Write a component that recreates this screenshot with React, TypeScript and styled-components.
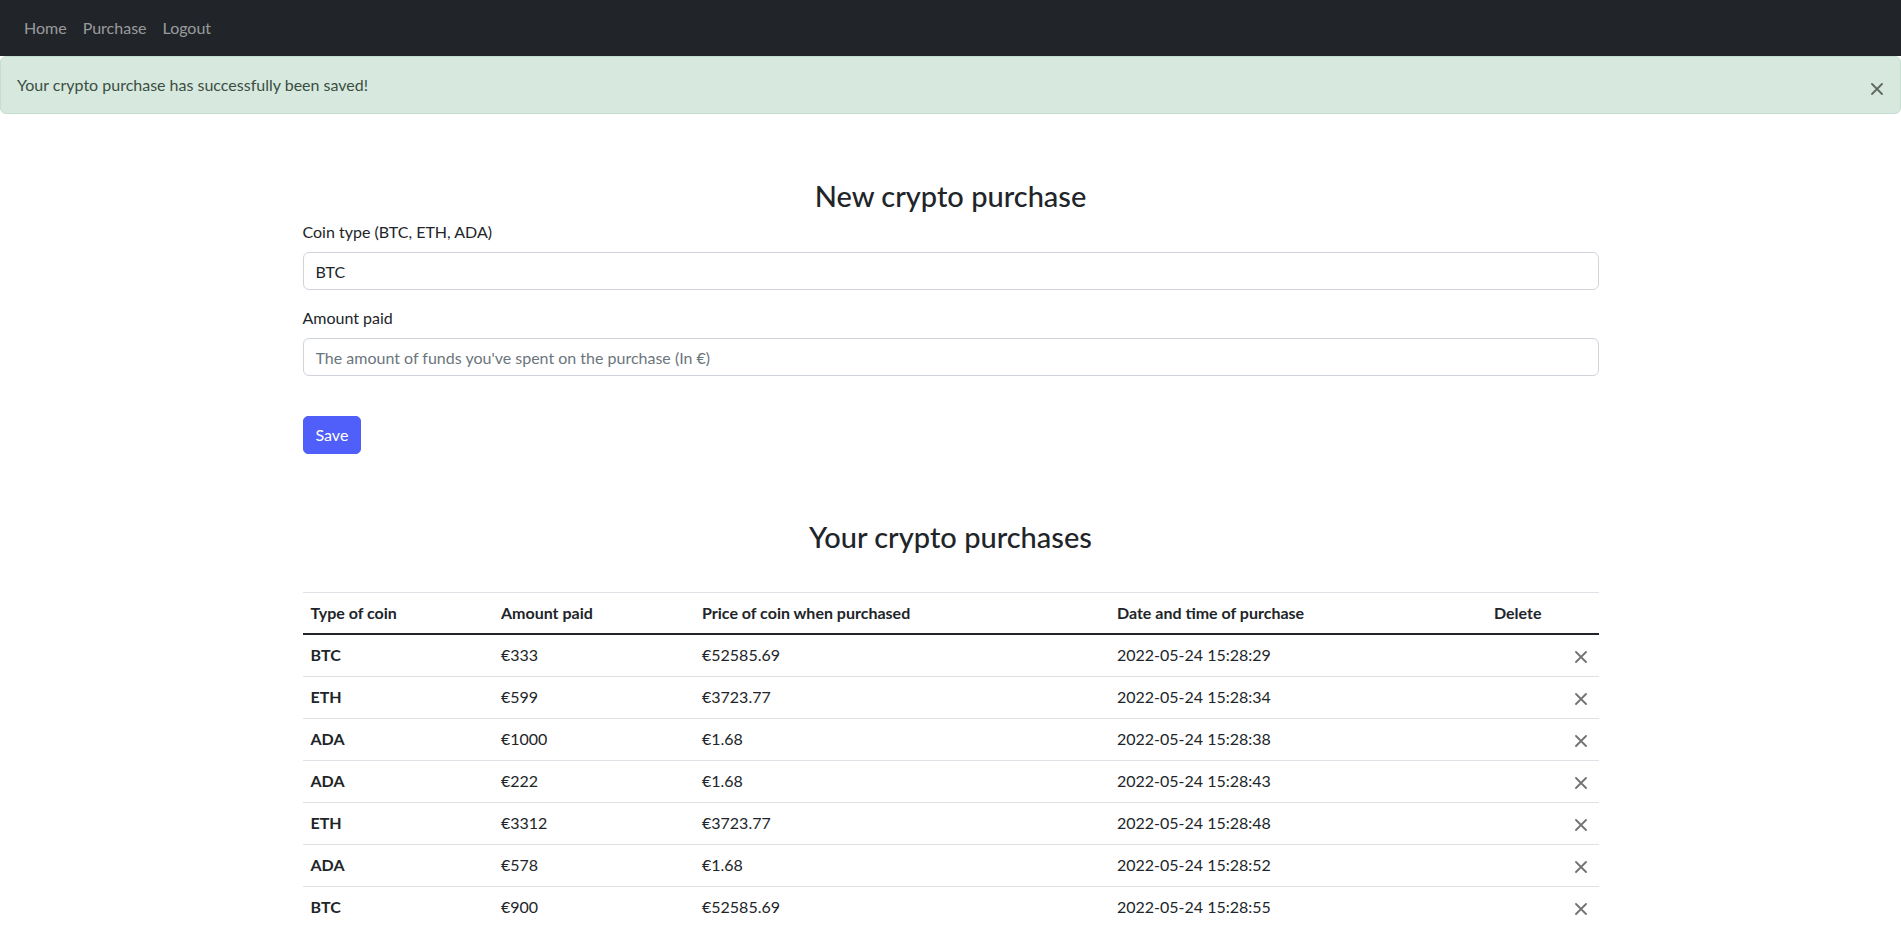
import React from "react";
import styled, { createGlobalStyle } from "styled-components";

const GlobalStyle = createGlobalStyle`
  *, *::before, *::after { box-sizing: border-box; }
  html, body { margin: 0; padding: 0; }
  body {
    font-family: Lato, "Noto Sans", sans-serif;
    font-size: 16px;
    line-height: 1.5;
    color: #212529;
    background: #ffffff;
  }
`;

const Navbar = styled.nav`
  height: 56px;
  background: #212529;
  display: flex;
  align-items: center;
  padding: 0 16px;
`;

const NavLink = styled.a`
  color: rgba(255, 255, 255, 0.55);
  text-decoration: none;
  padding: 8px 8px;
  font-size: 16px;
  line-height: 24px;
  cursor: pointer;
`;

const Alert = styled.div`
  position: relative;
  background: #d7e8de;
  border: 1px solid #c4ded0;
  border-radius: 6px;
  color: #3a4f43;
  padding: 16px 48px 16px 16px;
  line-height: 24px;
`;

const AlertClose = styled.button`
  position: absolute;
  right: 13px;
  top: 20px;
  width: 20px;
  height: 24px;
  padding: 0;
  border: 0;
  background: transparent;
  display: flex;
  align-items: center;
  justify-content: center;
  cursor: pointer;
  opacity: 0.55;
`;

const RowDelete = styled.button`
  display: flex;
  margin-left: auto;
  width: 20px;
  height: 25px;
  padding: 2px 0 0;
  border: 0;
  background: transparent;
  align-items: center;
  justify-content: center;
  cursor: pointer;
  opacity: 0.55;
`;

const Container = styled.main`
  width: 1296px;
  margin: 0 auto;
`;

const Heading = styled.h2<{ $mt: number; $mb: number }>`
  margin: ${(p) => p.$mt}px 0 ${(p) => p.$mb}px;
  font-size: 29px;
  line-height: 35px;
  font-weight: 500;
  text-align: center;
  color: #212529;
`;

const FormGroup = styled.div`
  display: flex;
  flex-direction: column;
  margin-bottom: 16px;
`;

const Label = styled.label`
  line-height: 24px;
  margin-bottom: 8px;
  color: #212529;
`;

const Input = styled.input`
  height: 38px;
  padding: 6px 12px;
  font-family: inherit;
  font-size: 16px;
  line-height: 24px;
  color: #212529;
  border: 1px solid #ced4da;
  border-radius: 6px;
  outline: none;
  &::placeholder {
    color: #6c757d;
  }
`;

const SaveButton = styled.button`
  margin-top: 24px;
  height: 38px;
  padding: 6px 12px;
  font-family: inherit;
  font-size: 16px;
  line-height: 24px;
  color: #ffffff;
  background: #515ffa;
  border: 1px solid #515ffa;
  border-radius: 5px;
  cursor: pointer;
`;

const Table = styled.table`
  width: 100%;
  table-layout: fixed;
  border-collapse: collapse;
  margin-top: 38px;
  border-top: 1px solid #dee2e6;
`;

const HeadCell = styled.th<{ $w: number }>`
  width: ${(p) => p.$w}px;
  text-align: left;
  font-weight: 700;
  padding: 8px;
  line-height: 24px;
  border-bottom: 2px solid #212529;
  vertical-align: bottom;
`;

const Cell = styled.td<{ $bold?: boolean }>`
  padding: 8px;
  line-height: 24px;
  font-weight: ${(p) => (p.$bold ? 700 : 400)};
  text-align: left;
  border-bottom: 1px solid #dee2e6;
  vertical-align: top;
`;

const XIcon = () => (
  <svg width="12" height="12" viewBox="0 0 12 12" aria-hidden="true">
    <path d="M1 1 L11 11 M11 1 L1 11" stroke="#000" strokeWidth="1.8" strokeLinecap="round" />
  </svg>
);

const columns = [
  { label: "Type of coin", w: 190.5 },
  { label: "Amount paid", w: 201 },
  { label: "Price of coin when purchased", w: 415 },
  { label: "Date and time of purchase", w: 377 },
  { label: "Delete", w: 112.5 },
];

const purchases = [
  { coin: "BTC", paid: "€333", price: "€52585.69", date: "2022-05-24 15:28:29" },
  { coin: "ETH", paid: "€599", price: "€3723.77", date: "2022-05-24 15:28:34" },
  { coin: "ADA", paid: "€1000", price: "€1.68", date: "2022-05-24 15:28:38" },
  { coin: "ADA", paid: "€222", price: "€1.68", date: "2022-05-24 15:28:43" },
  { coin: "ETH", paid: "€3312", price: "€3723.77", date: "2022-05-24 15:28:48" },
  { coin: "ADA", paid: "€578", price: "€1.68", date: "2022-05-24 15:28:52" },
  { coin: "BTC", paid: "€900", price: "€52585.69", date: "2022-05-24 15:28:55" },
];

export default function App() {
  return (
    <>
      <GlobalStyle />
      <Navbar>
        <NavLink>Home</NavLink>
        <NavLink>Purchase</NavLink>
        <NavLink>Logout</NavLink>
      </Navbar>
      <Alert role="alert">
        Your crypto purchase has successfully been saved!
        <AlertClose aria-label="Close">
          <XIcon />
        </AlertClose>
      </Alert>
      <Container>
        <Heading $mt={64} $mb={7}>New crypto purchase</Heading>
        <form onSubmit={(e) => e.preventDefault()}>
          <FormGroup>
            <Label>Coin type (BTC, ETH, ADA)</Label>
            <Input defaultValue="BTC" />
          </FormGroup>
          <FormGroup>
            <Label>Amount paid</Label>
            <Input placeholder="The amount of funds you've spent on the purchase (In €)" />
          </FormGroup>
          <SaveButton type="submit">Save</SaveButton>
        </form>
        <Heading $mt={65} $mb={0}>Your crypto purchases</Heading>
        <Table>
          <thead>
            <tr>
              {columns.map((c) => (
                <HeadCell key={c.label} $w={c.w}>{c.label}</HeadCell>
              ))}
            </tr>
          </thead>
          <tbody>
            {purchases.map((p, i) => (
              <tr key={i}>
                <Cell $bold>{p.coin}</Cell>
                <Cell>{p.paid}</Cell>
                <Cell>{p.price}</Cell>
                <Cell>{p.date}</Cell>
                <Cell>
                  <RowDelete aria-label="Delete">
                    <XIcon />
                  </RowDelete>
                </Cell>
              </tr>
            ))}
          </tbody>
        </Table>
      </Container>
    </>
  );
}
